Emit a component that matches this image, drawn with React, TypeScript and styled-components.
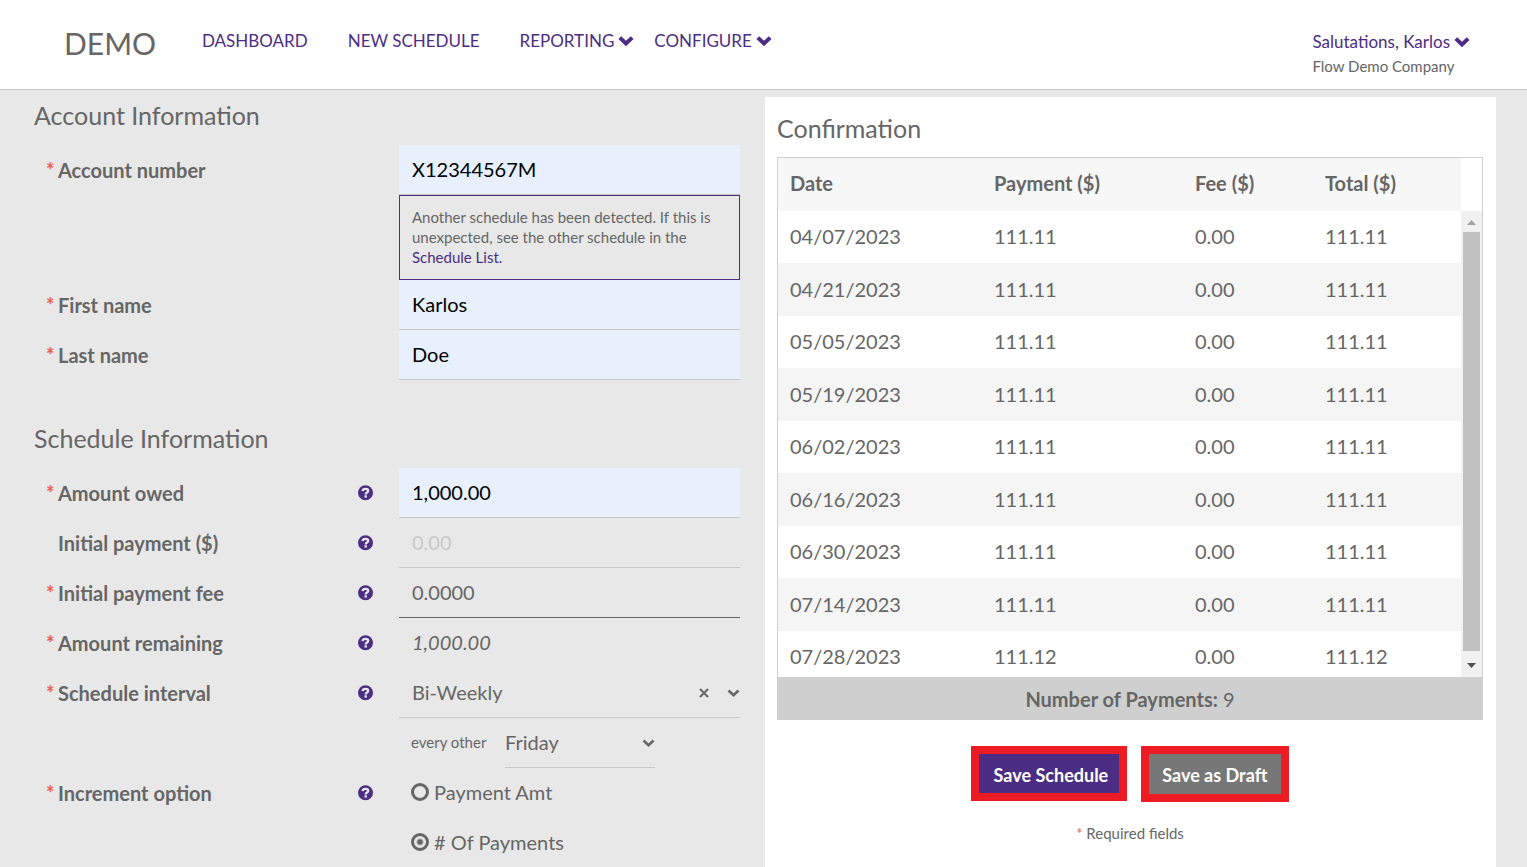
import React, { useState } from "react";
import styled, { createGlobalStyle, css } from "styled-components";

const ink = "#666666";
const purple = "#4b2e83";
const line = "#c8c8c8";

const GlobalStyle = createGlobalStyle`
  *, *::before, *::after { box-sizing: border-box; }
  body {
    margin: 0;
    background: #e8e8e8;
    color: ${ink};
    font-family: Lato, "Liberation Sans", sans-serif;
    font-size: 20px;
    line-height: 24px;
  }
  input, select, button { font: inherit; color: inherit; }
  a { color: ${purple}; text-decoration: none; }
`;

const Page = styled.div`
  display: flex;
  flex-direction: column;
  height: 100vh;
  overflow: hidden;
`;

const Header = styled.header`
  display: flex;
  flex: none;
  align-items: flex-start;
  height: 90px;
  padding: 0 57px 0 64px;
  background: #fefefe;
  border-bottom: 1px solid ${line};
`;

const Logo = styled.div`
  width: 138px;
  padding-top: 23px;
  font-size: 30px;
  line-height: 40px;
`;

const Nav = styled.nav`
  display: flex;
  flex: 1;
  padding-top: 29px;
  font-size: 17px;
`;

const NavLink = styled.a<{ $menu?: boolean }>`
  display: flex;
  align-items: center;
  gap: 4px;
  margin-right: ${(p) => (p.$menu ? 20 : 40)}px;
`;

const UserMenu = styled.div`
  padding-top: 30px;
  font-size: 15px;
`;

const UserLink = styled.a`
  display: flex;
  align-items: center;
  gap: 4px;
  font-size: 17px;
`;

const Main = styled.main`
  display: grid;
  flex: 1;
  grid-template-columns: 1fr 1fr;
  min-height: 0;
  padding: 0 31px 0 34px;
`;

const FormColumn = styled.form`
  padding: 10px 25px 0 0;
`;

const Section = styled.section`
  margin-bottom: 43px;
`;

const Title = styled.h2`
  margin: 0 0 15px;
  font-size: 25px;
  font-weight: 400;
  line-height: 30px;
`;

const Row = styled.div`
  display: grid;
  grid-template-columns: 365fr 341fr;
  align-items: start;
`;

const LabelCell = styled.div`
  display: flex;
  align-items: center;
  justify-content: space-between;
  height: 50px;
  padding: 0 26px 0 12px;
`;

const Label = styled.label`
  display: flex;
  font-weight: 700;
`;

const Star = styled.span`
  width: 12px;
  color: #e8604c;
`;

const HelpButton = styled.button`
  display: flex;
  padding: 0;
  border: 0;
  background: none;
  color: ${purple};
`;

type Tone = "filled" | "plain" | "active" | "readonly";

const TextInput = styled.input<{ $tone: Tone }>`
  display: block;
  width: 100%;
  height: 50px;
  padding: 0 13px 2px;
  border: 0;
  border-bottom: 1px solid ${line};
  border-radius: 0;
  outline: 0;
  background: none;
  ${(p) => p.$tone === "filled" && css`background: #e8f0fe; color: #000;`}
  ${(p) => p.$tone === "active" && css`border-color: ${ink};`}
  ${(p) => p.$tone === "readonly" && css`border-color: transparent; font-style: italic;`}
  &::placeholder { color: ${line}; opacity: 1; }
`;

const Notice = styled.p`
  margin: 0;
  padding: 11px 12px 12px;
  border: 1px solid ${purple};
  font-size: 15px;
  line-height: 20px;
`;

const SelectBox = styled.div`
  display: flex;
  align-items: center;
  width: 100%;
  height: 50px;
  border-bottom: 1px solid ${line};
`;

const Select = styled.select<{ $inset?: boolean }>`
  flex: 1;
  min-width: 0;
  height: 100%;
  padding: 0 0 2px ${(p) => (p.$inset ? 13 : 0)}px;
  border: 0;
  outline: 0;
  background: none;
  appearance: none;
`;

const ClearButton = styled.button`
  display: flex;
  margin-right: 17px;
  padding: 0;
  border: 0;
  background: none;
`;

const EveryOther = styled.div`
  display: flex;
  align-items: center;
  padding: 0 85px 0 12px;
`;

const EveryLabel = styled.label`
  flex: none;
  width: 94px;
  padding-bottom: 2px;
  font-size: 15px;
`;

const RadioLabel = styled.label`
  display: flex;
  align-items: center;
  gap: 5px;
  height: 50px;
  padding: 0 0 2px 12px;
`;

const Radio = styled.input`
  width: 18px;
  height: 18px;
  margin: 0;
  border: 3px solid ${ink};
  border-radius: 50%;
  appearance: none;
  &:checked { background: radial-gradient(circle, ${ink} 2px, transparent 4px); }
`;

const Card = styled.section`
  margin-top: 7px;
  padding: 16px 13px 0 12px;
  background: #fff;
`;

const CardTitle = styled(Title)`
  margin-bottom: 14px;
`;

const TableFrame = styled.div`
  display: grid;
  grid-template-columns: 1fr 21px;
  height: 520px;
  border: 1px solid #cfcfcf;
  border-bottom: 0;
`;

const TableScroller = styled.div`
  overflow-y: auto;
  scrollbar-width: none;
`;

const Table = styled.table`
  width: 100%;
  border-collapse: collapse;
  table-layout: fixed;
`;

const HeadCell = styled.th<{ $width: number }>`
  position: sticky;
  top: 0;
  width: ${(p) => p.$width}px;
  height: 53px;
  padding: 0 12px 3px;
  background: #f7f7f7;
  text-align: left;
`;

const BodyRow = styled.tr`
  height: 52px;
  &:nth-child(even) {
    height: 53px;
    background: #f5f5f5;
  }
`;

const Cell = styled.td`
  padding: 0 12px 2px;
`;

const ScrollTrack = styled.div`
  display: flex;
  flex-direction: column;
  align-items: center;
  margin-top: 53px;
  background: #f1f1f1;
`;

const ScrollThumb = styled.div`
  flex: 1;
  width: 17px;
  background: #c1c1c1;
`;

const ScrollArrow = styled.svg<{ $height: number }>`
  flex: none;
  width: 17px;
  height: ${(p) => p.$height}px;
`;

const Total = styled.div`
  padding: 10px 0 9px;
  background: #cfcfcf;
  text-align: center;
`;

const Actions = styled.div`
  display: flex;
  align-items: flex-start;
  justify-content: center;
  gap: 14px;
  margin-top: 26px;
`;

const ActionButton = styled.button<{ $primary?: boolean }>`
  padding: ${(p) => (p.$primary ? "9px 11px 6px 15px" : "9px 14px 7px 13px")};
  border: 8px solid #ed1c24;
  background: ${(p) => (p.$primary ? purple : "#777777")};
  color: #fff;
  font-size: 18px;
  font-weight: 700;
  white-space: nowrap;
`;

const Required = styled.p`
  margin: 19px 0 0;
  font-size: 15px;
  text-align: center;
`;

const MenuChevron = () => (
  <svg width="16" height="16" viewBox="0 0 16 16" aria-hidden="true">
    <path d="M1.800 4.600L8 10.400l6.200-5.800" fill="none" stroke="currentColor" strokeWidth="4" />
  </svg>
);

const SelectChevron = () => (
  <svg width="13" height="16" viewBox="0 0 13 16" aria-hidden="true">
    <path d="M1.500 5.500l5 4.800 5-4.800" fill="none" stroke="currentColor" strokeWidth="2.600" />
  </svg>
);

const Help = () => (
  <HelpButton type="button" aria-label="Help">
    <svg width="15" height="16" viewBox="0 0 15 16" aria-hidden="true">
      <circle cx="7.5" cy="7.7" r="7.5" fill="currentColor" />
      <path d="M4.600 6.200C4.800 4.500 5.900 3.900 7.600 3.900c1.500 0 2.600.8 2.600 2.100 0 1.700-2.500 1.500-2.500 3.400" fill="none" stroke="#e8e8e8" strokeWidth="2.300" />
      <path d="M6.500 10.300h2.400v2.300H6.500z" fill="#e8e8e8" />
    </svg>
  </HelpButton>
);

type FieldProps = {
  id: string;
  label: string;
  required?: boolean;
  help?: boolean;
  children: React.ReactNode;
};

const Field = ({ id, label, required = true, help, children }: FieldProps) => (
  <Row>
    <LabelCell>
      <Label htmlFor={id}>
        <Star>{required ? "*" : ""}</Star>
        {label}
      </Label>
      {help && <Help />}
    </LabelCell>
    <div>{children}</div>
  </Row>
);

const columns = [
  { name: "Date", width: 204 },
  { name: "Payment ($)", width: 201 },
  { name: "Fee ($)", width: 130 },
  { name: "Total ($)", width: 148 },
];

const payments = [
  ["04/07/2023", "111.11"],
  ["04/21/2023", "111.11"],
  ["05/05/2023", "111.11"],
  ["05/19/2023", "111.11"],
  ["06/02/2023", "111.11"],
  ["06/16/2023", "111.11"],
  ["06/30/2023", "111.11"],
  ["07/14/2023", "111.11"],
  ["07/28/2023", "111.12"],
];

export default function App() {
  const [option, setOption] = useState("count");
  const [interval, setInterval] = useState("Bi-Weekly");

  return (
    <Page>
      <GlobalStyle />
      <Header>
        <Logo>DEMO</Logo>
        <Nav>
          <NavLink href="#dashboard">DASHBOARD</NavLink>
          <NavLink href="#new">NEW SCHEDULE</NavLink>
          <NavLink href="#reporting" $menu>REPORTING<MenuChevron /></NavLink>
          <NavLink href="#configure" $menu>CONFIGURE<MenuChevron /></NavLink>
        </Nav>
        <UserMenu>
          <UserLink href="#account">Salutations, Karlos<MenuChevron /></UserLink>
          Flow Demo Company
        </UserMenu>
      </Header>
      <Main>
        <FormColumn>
          <Section>
            <Title>Account Information</Title>
            <Field id="account" label="Account number">
              <TextInput id="account" $tone="filled" defaultValue="X12344567M" />
              <Notice>
                Another schedule has been detected. If this is unexpected, see the other schedule in the{" "}
                <a href="#list">Schedule List.</a>
              </Notice>
            </Field>
            <Field id="first" label="First name">
              <TextInput id="first" $tone="filled" defaultValue="Karlos" />
            </Field>
            <Field id="last" label="Last name">
              <TextInput id="last" $tone="filled" defaultValue="Doe" />
            </Field>
          </Section>
          <Section>
            <Title>Schedule Information</Title>
            <Field id="owed" label="Amount owed" help>
              <TextInput id="owed" $tone="filled" defaultValue="1,000.00" />
            </Field>
            <Field id="initial" label="Initial payment ($)" required={false} help>
              <TextInput id="initial" $tone="plain" placeholder="0.00" />
            </Field>
            <Field id="fee" label="Initial payment fee" help>
              <TextInput id="fee" $tone="active" defaultValue="0.0000" />
            </Field>
            <Field id="remaining" label="Amount remaining" help>
              <TextInput id="remaining" $tone="readonly" readOnly value="1,000.00" />
            </Field>
            <Field id="interval" label="Schedule interval" help>
              <SelectBox>
                <Select id="interval" $inset value={interval} onChange={(e) => setInterval(e.target.value)}>
                  <option value=""></option>
                  <option>Bi-Weekly</option>
                </Select>
                <ClearButton type="button" aria-label="Clear interval" onClick={() => setInterval("")}>
                  <svg width="12" height="12" viewBox="0 0 12 12" aria-hidden="true">
                    <path d="M2 2l8 8M10 2l-8 8" fill="none" stroke="currentColor" strokeWidth="2" />
                  </svg>
                </ClearButton>
                <SelectChevron />
              </SelectBox>
              <EveryOther>
                <EveryLabel htmlFor="weekday">every other</EveryLabel>
                <SelectBox>
                  <Select id="weekday" defaultValue="Friday">
                    <option>Friday</option>
                  </Select>
                  <SelectChevron />
                </SelectBox>
              </EveryOther>
            </Field>
            <Field id="option-amount" label="Increment option" help>
              <RadioLabel>
                <Radio type="radio" name="option" id="option-amount" checked={option === "amount"} onChange={() => setOption("amount")} />
                Payment Amt
              </RadioLabel>
              <RadioLabel>
                <Radio type="radio" name="option" checked={option === "count"} onChange={() => setOption("count")} />
                # Of Payments
              </RadioLabel>
            </Field>
          </Section>
        </FormColumn>
        <Card>
          <CardTitle>Confirmation</CardTitle>
          <TableFrame>
            <TableScroller>
              <Table>
                <thead>
                  <tr>
                    {columns.map((c) => (
                      <HeadCell key={c.name} $width={c.width}>{c.name}</HeadCell>
                    ))}
                  </tr>
                </thead>
                <tbody>
                  {payments.map(([date, amount]) => (
                    <BodyRow key={date}>
                      <Cell>{date}</Cell>
                      <Cell>{amount}</Cell>
                      <Cell>0.00</Cell>
                      <Cell>{amount}</Cell>
                    </BodyRow>
                  ))}
                </tbody>
              </Table>
            </TableScroller>
            <ScrollTrack aria-hidden="true">
              <ScrollArrow $height={21} viewBox="0 0 17 21">
                <path d="M4 14l4.500-5 4.500 5z" fill="#a3a3a3" />
              </ScrollArrow>
              <ScrollThumb />
              <ScrollArrow $height={26} viewBox="0 0 17 26">
                <path d="M4 12l4.500 5 4.500-5z" fill="#505050" />
              </ScrollArrow>
            </ScrollTrack>
          </TableFrame>
          <Total><strong>Number of Payments:</strong> 9</Total>
          <Actions>
            <ActionButton type="button" $primary>Save Schedule</ActionButton>
            <ActionButton type="button">Save as Draft</ActionButton>
          </Actions>
          <Required><Star>*</Star> Required fields</Required>
        </Card>
      </Main>
    </Page>
  );
}
